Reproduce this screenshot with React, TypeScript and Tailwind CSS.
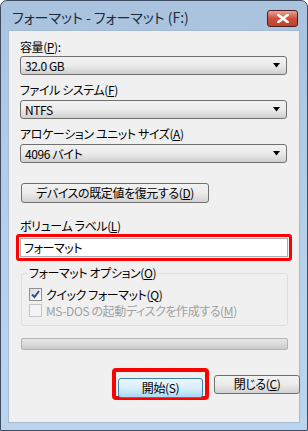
import React from 'react'

const font = "font-['Noto_Sans_CJK_JP','Liberation_Sans',sans-serif] [font-feature-settings:'palt']"

const Arrow = () => (
  <svg width="8" height="5" viewBox="0 0 8 5" className="shrink-0">
    <path d="M0 0H7L3.5 4.5Z" fill="#000" />
  </svg>
)

const Select = ({ value, className = '' }: { value: string; className?: string }) => (
  <div
    className={`h-[19px] w-[267px] flex items-center justify-between pl-[4px] pr-[5px] rounded-[3px] border border-[#707070] bg-gradient-to-b from-[#f2f2f2] via-[#ebebeb] to-[#cfcfcf] text-[12px] leading-none tracking-[-0.4px] ${className}`}
  >
    <span>{value}</span>
    <Arrow />
  </div>
)

const Label = ({ text, u, rest = '', className = '' }: { text: string; u: string; rest?: string; className?: string }) => (
  <div className={`h-[14px] text-[12px] leading-[14px] tracking-[-0.4px] ${className}`}>
    {text}(<span className="underline">{u}</span>){rest}
  </div>
)

const Check = ({ checked, disabled }: { checked?: boolean; disabled?: boolean }) => (
  <div
    className={`w-[13px] h-[13px] border ${disabled ? 'border-[#c5c5c5] bg-[#f4f4f4]' : 'border-[#8e8f8f] bg-gradient-to-br from-[#dcdcdc] to-[#fbfbfb]'} flex items-center justify-center`}
  >
    {checked && (
      <svg width="9" height="9" viewBox="0 0 9 9">
        <path d="M1 4.5L3.5 7L8 1" stroke="#2a4d9b" strokeWidth="2" fill="none" />
      </svg>
    )}
  </div>
)

export default function App() {
  return (
    <div className={`w-[308px] h-[431px] ${font} text-black`}>
      <div className="w-full h-full border border-[#3d4d5f] rounded-t-[7px] bg-gradient-to-b from-[#a9c3df] via-[#b6cfe9] to-[#bcd5ee] flex flex-col px-[7px] pb-[7px]">
        {/* title bar */}
        <div className="h-[29px] flex items-start justify-between pl-[4px] pr-[2px] pt-[8px]">
          <span className="text-[14px] leading-[16px] text-[#1e2a38]">フォーマット - フォーマット (F:)</span>
          <div className="mt-[1px] w-[31px] h-[17px] rounded-[3px] border border-[#4b1f1f] bg-gradient-to-b from-[#e8a395] via-[#c8503c] to-[#c4402c] flex items-center justify-center">
            <svg width="12" height="9" viewBox="0 0 12 9">
              <path d="M1.5 1L10.5 8M10.5 1L1.5 8" stroke="#fff" strokeWidth="2.6" strokeLinecap="square" />
            </svg>
          </div>
        </div>

        {/* client */}
        <div className="flex-1 bg-[#f0f0f0] border border-[#a5bbd3] pl-[11px] pt-[9px] flex flex-col">
          <Label text="容量" u="P" rest=":" />
          <Select value="32.0 GB" className="mt-[2px]" />
          <Label text="ファイル システム" u="F" className="mt-[8px]" />
          <Select value="NTFS" className="mt-[3px]" />
          <Label text="アロケーション ユニット サイズ" u="A" className="mt-[8px]" />
          <Select value="4096 バイト" className="mt-[3px]" />

          <button className="mt-[20px] ml-[1px] w-[188px] h-[20px] rounded-[3px] border border-[#707070] bg-gradient-to-b from-[#f2f2f2] via-[#ebebeb] to-[#d2d2d2] text-[12px] leading-none tracking-[-0.4px]">
            デバイスの既定値を復元する(<span className="underline">D</span>)
          </button>

          <Label text="ボリューム ラベル" u="L" className="mt-[16px]" />
          <div className="mt-[1px] -ml-[4px] w-[276px] h-[27px] rounded-[3px] border-[3px] border-[#ff0000] p-[1px]">
            <div className="h-full bg-white border border-[#abadb3] flex items-center pl-[3px] text-[12px] leading-none tracking-[-0.4px]">
              フォーマット
            </div>
          </div>

          {/* group box */}
          <div className="relative mt-[12px] ml-[1px] w-[267px] h-[53px] border border-[#d5dfe5] rounded-[3px] pt-[14px] pl-[7px] tracking-[-0.4px]">
            <div className="absolute -top-[8px] left-[5px] px-[2px] bg-[#f0f0f0] text-[12px] leading-[14px]">
              フォーマット オプション(<span className="underline">O</span>)
            </div>
            <div className="flex items-center gap-[4px] h-[13px]">
              <Check checked />
              <span className="text-[12px] leading-none">
                クイック フォーマット(<span className="underline">Q</span>)
              </span>
            </div>
            <div className="flex items-center gap-[4px] h-[13px] mt-[3px]">
              <Check disabled />
              <span className="text-[12px] leading-none text-[#a0a0a0]">
                MS-DOS の起動ディスクを作成する(<span className="underline">M</span>)
              </span>
            </div>
          </div>

          {/* progress */}
          <div className="mt-[12px] ml-[1px] w-[267px] h-[12px] rounded-[2px] border border-[#b2b2b2] bg-gradient-to-b from-[#e6e6e6] via-[#dadada] to-[#cbcbcb]" />

          {/* buttons */}
          <div className="mt-[18px] flex items-center justify-end gap-[5px] w-[280px] tracking-[-0.4px]">
            <div className="w-[97px] h-[32px] rounded-[4px] border-[4px] border-[#ff0000] p-[2px]">
              <button className="w-full h-full rounded-[3px] border border-[#3c7fb1] bg-gradient-to-b from-[#eaf6fd] via-[#d9f0fc] to-[#a7d9f5] text-[12px] leading-none">
                開始(S)
              </button>
            </div>
            <button className="w-[86px] h-[19px] rounded-[3px] border border-[#707070] bg-gradient-to-b from-[#f2f2f2] via-[#ebebeb] to-[#d2d2d2] text-[12px] leading-none">
              閉じる(<span className="underline">C</span>)
            </button>
          </div>
        </div>
      </div>
    </div>
  )
}
